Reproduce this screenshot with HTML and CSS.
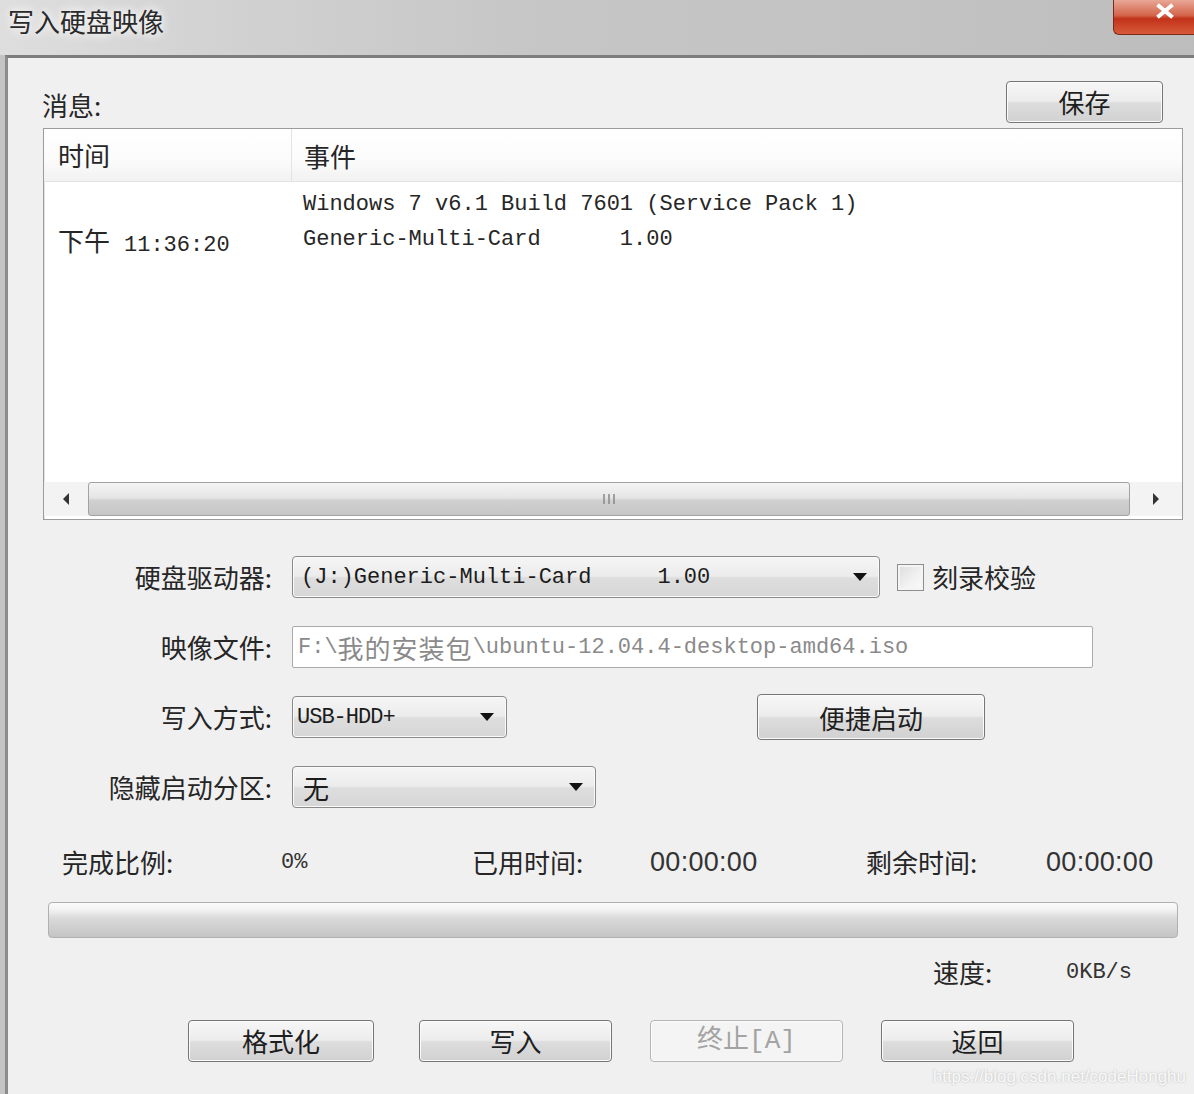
FILE: index.html
```html
<!doctype html>
<html lang="zh-CN">
<head>
    <meta charset="UTF-8">
    <title>写入硬盘映像</title>
    <link rel="stylesheet" href="styles.css">
</head>
<body>
    <div class="window">
        <div class="titlebar">
            <span class="title">写入硬盘映像</span>
            <span class="close">
                <svg width="20" height="16" viewBox="0 0 20 16">
                    <path d="M4 3 L16 13 M16 3 L4 13" stroke="#fff" stroke-width="4" stroke-linecap="square"/>
                </svg>
            </span>
        </div>

        <div class="client">
            <div class="msg-head">
                <span class="label">消息:</span>
                <button class="btn btn-save">保存</button>
            </div>

            <div class="log">
                <div class="log-head">
                    <div class="col-time">时间</div>
                    <div class="col-event">事件</div>
                </div>
                <div class="log-body">
                    <div class="log-row">
                        <div class="col-time"></div>
                        <div class="col-event mono">Windows 7 v6.1 Build 7601 (Service Pack 1)</div>
                    </div>
                    <div class="log-row">
                        <div class="col-time"><span class="cjk">下午</span><span class="mono clock">11:36:20</span></div>
                        <div class="col-event mono">Generic-Multi-Card      1.00</div>
                    </div>
                </div>
                <div class="hscroll">
                    <div class="arrow-btn">
                        <svg width="10" height="14" viewBox="0 0 10 14"><path d="M8 1 L2 7 L8 13 Z" fill="#333"/></svg>
                    </div>
                    <div class="thumb">
                        <svg width="16" height="12" viewBox="0 0 16 12">
                            <path d="M3 1 V11 M8 1 V11 M13 1 V11" stroke="#888" stroke-width="1.5"/>
                        </svg>
                    </div>
                    <div class="arrow-btn">
                        <svg width="10" height="14" viewBox="0 0 10 14"><path d="M2 1 L8 7 L2 13 Z" fill="#333"/></svg>
                    </div>
                </div>
            </div>

            <div class="form">
                <div class="form-row">
                    <span class="form-label">硬盘驱动器:</span>
                    <div class="combo combo-drive"><span class="mono">(J:)Generic-Multi-Card     1.00</span><i class="caret"></i></div>
                    <span class="checkbox"></span>
                    <span class="check-label">刻录校验</span>
                </div>
                <div class="form-row">
                    <span class="form-label">映像文件:</span>
                    <div class="textbox"><span class="mono">F:\</span><span class="cjk-mono">我的安装包</span><span class="mono">\ubuntu-12.04.4-desktop-amd64.iso</span></div>
                </div>
                <div class="form-row">
                    <span class="form-label">写入方式:</span>
                    <div class="combo combo-mode"><span class="mono narrow">USB-HDD+</span><i class="caret"></i></div>
                    <button class="btn btn-quick">便捷启动</button>
                </div>
                <div class="form-row">
                    <span class="form-label">隐藏启动分区:</span>
                    <div class="combo combo-hide"><span class="cjk">无</span><i class="caret"></i></div>
                </div>
            </div>

            <div class="stats">
                <span class="stat-key w-219">完成比例:</span>
                <span class="stat-val mono w-191">0%</span>
                <span class="stat-key w-178">已用时间:</span>
                <span class="stat-val num w-216">00:00:00</span>
                <span class="stat-key w-180">剩余时间:</span>
                <span class="stat-val num">00:00:00</span>
            </div>

            <div class="progress"></div>

            <div class="speed">
                <span class="stat-key w-133">速度:</span>
                <span class="stat-val mono">0KB/s</span>
            </div>

            <div class="actions">
                <button class="btn btn-action btn-first">格式化</button>
                <button class="btn btn-action">写入</button>
                <button class="btn btn-action" disabled>终止[A]</button>
                <button class="btn btn-action">返回</button>
            </div>

            <span class="watermark">https://blog.csdn.net/codeHonghu</span>
        </div>
    </div>
</body>
</html>
```

FILE: styles.css
```css
body {
    margin: 0;
    width: 1194px;
    height: 1094px;
    overflow: hidden;
    background: #f0f0f0;
    font-family: "Noto Sans CJK SC", "Liberation Sans", sans-serif;
    color: #262626;
}

.window {
    display: flex;
    flex-direction: column;
    height: 1094px;
    background: #c4c4c4;
}

/* caption */
.titlebar {
    height: 55px;
    display: flex;
    justify-content: space-between;
    align-items: flex-start;
    background: linear-gradient(90deg, #dedede 0%, #d2d2d2 18%, #c6c6c6 45%, #c2c2c2 80%, #bdbdbd 100%);
}

.title {
    margin: 2px 0 0 8px;
    font-size: 26px;
    line-height: 38px;
    color: #2a2a2a;
    text-shadow: 0 0 8px #fff, 0 0 12px #f4f4f4;
}

.close {
    width: 81px;
    height: 35px;
    display: flex;
    justify-content: center;
    align-items: flex-start;
    padding: 3px 0 0 22px;
    box-sizing: border-box;
    border: 1px solid #7a2b1c;
    border-top: 0;
    border-right: 0;
    border-radius: 0 0 0 6px;
    background: linear-gradient(180deg, #e8a796 0%, #d4654b 45%, #c1321a 55%, #d75b3b 100%);
}

/* client area */
.client {
    flex: 1;
    position: relative;
    margin-left: 5px;
    border-top: 3px solid #7d7d7d;
    border-left: 3px solid #8c8c8c;
    background: #f0f0f0;
    display: flex;
    flex-direction: column;
}

.label,
.form-label,
.check-label,
.stat-key {
    font-size: 26px;
    line-height: 30px;
    color: #262626;
}

.msg-head {
    margin: 23px 31px 0 34px;
    height: 42px;
    display: flex;
    justify-content: space-between;
    align-items: center;
}

.msg-head .label {
    margin-top: 6px;
}

.btn {
    font-family: "Noto Sans CJK SC", "Liberation Sans", sans-serif;
    font-size: 26px;
    color: #1e1e1e;
    border: 1px solid #767676;
    border-radius: 4px;
    background: linear-gradient(180deg, #f7f7f7 0%, #ececec 48%, #dddddd 52%, #d1d1d1 100%);
    box-shadow: inset 0 0 0 1px #fbfbfb;
    padding: 0;
}

.btn-save {
    width: 157px;
    height: 42px;
    line-height: 38px;
}

.btn:disabled {
    color: #a3a3a3;
    border-color: #b5b5b5;
    background: #f4f4f4;
    font-family: "Liberation Mono", "Noto Sans CJK SC", monospace;
}

/* event list */
.log {
    margin: 5px 0 0 35px;
    width: 1140px;
    height: 392px;
    box-sizing: border-box;
    border: 1px solid #9c9c9c;
    box-shadow: inset 1px 1px 0 #e2e2e2;
    background: #fff;
    display: flex;
    flex-direction: column;
}

.log-head {
    height: 52px;
    display: flex;
    align-items: center;
    border-bottom: 1px solid #e3e3e3;
    background: linear-gradient(180deg, #ffffff 0%, #fbfbfb 60%, #f2f2f2 100%);
    font-size: 26px;
}

.log-head .col-time {
    border-right: 1px solid #e4e4e4;
    height: 52px;
    line-height: 52px;
}

.col-time {
    width: 233px;
    padding-left: 14px;
    flex: none;
}

.col-event {
    padding-left: 12px;
}

.log-body {
    flex: 1;
    padding-top: 5px;
}

.log-row {
    display: flex;
    height: 35px;
    line-height: 35px;
    white-space: pre;
}

.mono {
    font-family: "Liberation Mono", "DejaVu Sans Mono", monospace;
    font-size: 22px;
    white-space: pre;
}

.clock {
    margin-left: 14px;
}

.cjk {
    font-size: 26px;
}

.cjk-mono {
    font-size: 26px;
    letter-spacing: 1px;
    font-family: "Noto Sans CJK SC", sans-serif;
}

.narrow {
    letter-spacing: -1px;
}

.hscroll {
    height: 34px;
    margin-bottom: 3px;
    display: flex;
    background: #f3f3f3;
}

.arrow-btn {
    width: 44px;
    display: flex;
    justify-content: center;
    align-items: center;
}

.arrow-btn:last-child {
    width: 52px;
}

.thumb {
    flex: 1;
    display: flex;
    justify-content: center;
    align-items: center;
    border: 1px solid #a2a2a2;
    border-radius: 3px;
    background: linear-gradient(180deg, #f4f4f4 0%, #e6e6e6 45%, #d0d0d0 55%, #c6c6c6 100%);
}

/* drive / image settings */
.form {
    margin-top: 36px;
    display: flex;
    flex-direction: column;
    gap: 28px;
}

.form-row {
    height: 42px;
    display: flex;
    align-items: center;
}

.form-label {
    width: 264px;
    margin-right: 20px;
    text-align: right;
    flex: none;
}

.combo {
    height: 42px;
    box-sizing: border-box;
    display: flex;
    align-items: center;
    justify-content: space-between;
    padding: 0 10px 0 10px;
    border: 1px solid #8a8a8a;
    border-radius: 4px;
    background: linear-gradient(180deg, #f5f5f5 0%, #ececec 48%, #dedede 52%, #d6d6d6 100%);
    box-shadow: inset 0 0 0 1px #fafafa;
    color: #1c1c1c;
}

.combo .mono {
    margin-left: -2px;
}

.combo-drive {
    width: 588px;
}

.combo-mode {
    width: 215px;
    padding-left: 6px;
}

.combo-hide {
    width: 304px;
}

.caret {
    width: 0;
    height: 0;
    margin-right: 2px;
    border-left: 7px solid transparent;
    border-right: 7px solid transparent;
    border-top: 8px solid #111;
}

.checkbox {
    width: 27px;
    height: 27px;
    margin-left: 17px;
    box-sizing: border-box;
    border: 1px solid #8e8e8e;
    background: linear-gradient(135deg, #dcdcdc 0%, #f2f2f2 60%, #fafafa 100%);
    box-shadow: inset 0 0 0 2px #f4f4f4;
}

.check-label {
    margin-left: 8px;
}

.textbox {
    width: 801px;
    height: 42px;
    box-sizing: border-box;
    padding-left: 5px;
    display: flex;
    align-items: center;
    border: 1px solid #ababab;
    border-radius: 2px;
    background: #fff;
    color: #8a8a8a;
}

.btn-quick {
    width: 228px;
    height: 46px;
    margin-left: 250px;
}

/* progress info */
.stats {
    margin: 39px 0 0 54px;
    height: 30px;
    display: flex;
    align-items: center;
}

.stat-val {
    color: #333;
}

.num {
    font-family: "Liberation Sans", "Noto Sans", sans-serif;
    font-size: 27px;
    letter-spacing: 0.3px;
}

.w-219 { width: 219px; }
.w-191 { width: 191px; }
.w-178 { width: 178px; }
.w-216 { width: 216px; }
.w-180 { width: 180px; }
.w-133 { width: 133px; }

.progress {
    margin: 25px 0 0 40px;
    width: 1130px;
    height: 36px;
    box-sizing: border-box;
    border: 1px solid #b0b0b0;
    border-radius: 4px;
    background: linear-gradient(180deg, #fbfbfb 0%, #f2f2f2 20%, #dadada 45%, #cccccc 80%, #c4c4c4 100%);
}

.speed {
    margin: 19px 0 0 925px;
    height: 30px;
    display: flex;
    align-items: center;
}

.actions {
    margin: 33px 0 0 180px;
    display: flex;
    gap: 38px;
}

.btn-action {
    width: 193px;
    height: 42px;
    line-height: 38px;
}

.btn-first {
    width: 186px;
    margin-right: 7px;
}

.watermark {
    position: absolute;
    right: 8px;
    bottom: 7px;
    font-family: "Liberation Sans", sans-serif;
    font-size: 17px;
    color: rgba(255, 255, 255, 0.9);
    text-shadow: 0 0 2px rgba(120, 120, 120, 0.5);
}
```
